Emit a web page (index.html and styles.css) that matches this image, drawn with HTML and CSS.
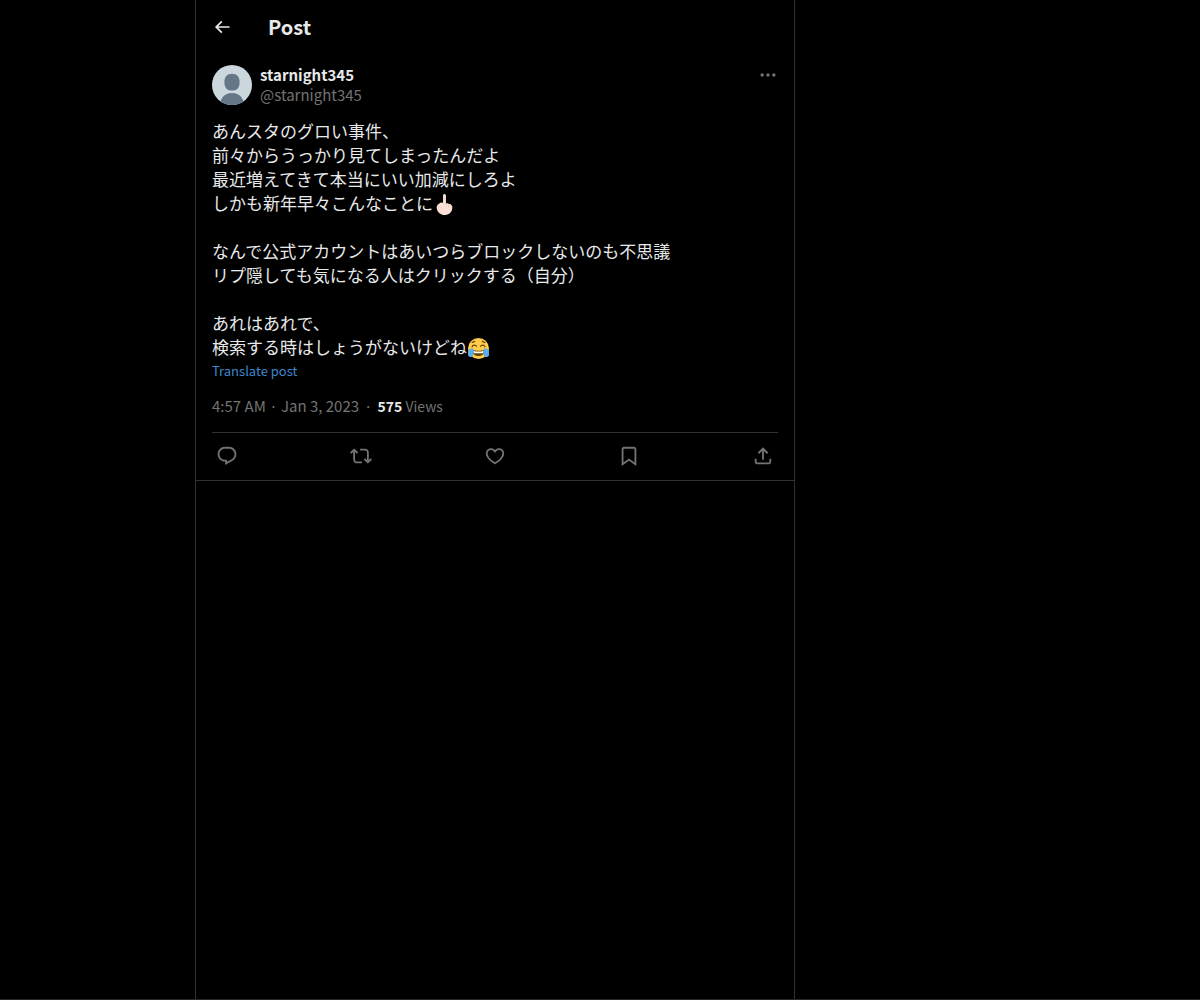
FILE: index.html
```html
<!DOCTYPE html>
<html lang="en">
<head>
    <meta charset="UTF-8">
    <meta name="viewport" content="width=device-width, initial-scale=1.0">
    <title>Post</title>
    <link rel="stylesheet" href="styles.css">
</head>
<body>
    <main class="column">
        <header class="top-bar">
            <button class="icon-btn back-btn" type="button" aria-label="Back">
                <svg viewBox="0 0 24 24"><path d="M7.414 13l5.043 5.04-1.414 1.42L3.586 12l7.457-7.46 1.414 1.42L7.414 11H21v2H7.414z"/></svg>
            </button>
            <h1>Post</h1>
        </header>

        <article class="post">
            <div class="author">
                <svg class="avatar" viewBox="0 0 40 40" role="img" aria-label="starnight345">
                    <circle cx="20" cy="20" r="20" fill="#ccd6dd"/>
                    <path d="M20 8.700c-5 0-7.600 3.400-7.600 8.200 0 4.900 1.700 8.600 7.600 8.600s7.600-3.700 7.600-8.600c0-4.800-2.600-8.200-7.600-8.200z" fill="#657786"/>
                    <path d="M8.500 36.400C10.500 30.800 14.500 28 20 28s9.500 2.800 11.500 8.400A20 20 0 0 1 8.500 36.400z" fill="#657786"/>
                </svg>
                <div class="names">
                    <a class="name" href="#">starnight345</a>
                    <a class="handle" href="#">@starnight345</a>
                </div>
                <button class="icon-btn more-btn" type="button" aria-label="More">
                    <svg viewBox="0 0 24 24"><path d="M3 12c0-1.100.9-2 2-2s2 .9 2 2-.9 2-2 2-2-.9-2-2zm9 2c1.100 0 2-.9 2-2s-.9-2-2-2-2 .9-2 2 .9 2 2 2zm7 0c1.100 0 2-.9 2-2s-.9-2-2-2-2 .9-2 2 .9 2 2 2z"/></svg>
                </button>
            </div>

            <div class="text" lang="ja">
                <p>あんスタのグロい事件、<br>
                前々からうっかり見てしまったんだよ<br>
                最近増えてきて本当にいい加減にしろよ<br>
                しかも新年早々こんなことに<svg class="emoji" viewBox="0 0 36 36" role="img" aria-label="middle finger"><path fill="#fce0d6" d="M15.500 3c0-1.700 1-3 2.500-3s2.500 1.300 2.500 3v13.500c.8-1.200 4.300-1 4.800.8 1.500-.8 4 .1 4.200 2.100 1.500.5 2.200 1.900 2 3.900-.4 7-5 12.700-12.500 12.700C10.500 36 5 30.500 4.500 23c-.2-3.600 3.200-5.800 6-7.500 2-1.200 5-1.200 5 1z"/><path fill="none" stroke="#efc5b6" stroke-linecap="round" d="M20.500 17v4.500M25.300 18v4.500M29.500 20v3.500M10 22.500c2 .2 3.500 1.500 4 3.500"/></svg></p>
                <p>なんで公式アカウントはあいつらブロックしないのも不思議<br>
                リプ隠しても気になる人はクリックする（自分）</p>
                <p>あれはあれで、<br>
                検索する時はしょうがないけどね<svg class="emoji" viewBox="0 0 36 36" role="img" aria-label="face with tears of joy"><circle cx="18" cy="18" r="18" fill="#ffcc4d"/><path fill="#664500" d="M28 20c-3 1.200-6 1.800-10 1.800S11 21.200 8 20c-.8-.3-1.500.3-1.300 1.300C7.600 26.700 12 31 18 31s10.400-4.300 11.300-9.700c.2-1-.5-1.600-1.300-1.300z"/><path fill="#fff" d="M9 21.800c2.500 1 5.700 1.500 9 1.500s6.500-.5 9-1.500c-.2 1.700-.9 3.200-1.700 4.200H10.700C9.900 25 9.200 23.500 9 21.800z"/><path fill="none" stroke="#664500" stroke-width="2" stroke-linecap="round" d="M7 15c1.200-3.600 6-3.800 7.500-.7M21.500 14.300C23 11.200 27.800 11.400 29 15M7 7.500c1.700 0 3.300-.8 4.500-2.300M24.500 5.200C25.700 6.700 27.300 7.500 29 7.500"/><path fill="#5dadec" d="M8.600 17.800C5 17.400 1 19.600-.3 22.900c-1.200 3.200-.2 7.500 2.500 9.100 2.300 1.500 5 .600 6.400-1.900 1.500-3.200 1-8 0-12.300zM27.400 17.800c3.600-.4 7.600 1.800 8.900 5.100 1.200 3.200.2 7.500-2.500 9.100-2.300 1.500-5 .6-6.400-1.900-1.500-3.200-1-8 0-12.300z"/></svg></p>
            </div>
            <button class="translate" type="button">Translate post</button>

            <p class="meta">
                <a href="#"><time datetime="2023-01-03T04:57">4:57 AM · Jan 3, 2023</time></a>
                <span>·</span>
                <span class="views"><strong>575</strong> Views</span>
            </p>

            <div class="actions">
                <button class="icon-btn" type="button" aria-label="Reply">
                    <svg viewBox="0 0 24 24"><path d="M1.751 10c0-4.420 3.584-8 8.005-8h4.366c4.490 0 8.129 3.640 8.129 8.130 0 2.960-1.607 5.680-4.196 7.110l-8.054 4.460v-3.690h-.067c-4.490.1-8.183-3.510-8.183-8.010zm8.005-6c-3.317 0-6.005 2.690-6.005 6 0 3.370 2.770 6.080 6.138 6.010l.351-.01h1.761v2.300l5.087-2.810c1.951-1.080 3.163-3.130 3.163-5.360 0-3.390-2.744-6.130-6.129-6.130H9.756z"/></svg>
                </button>
                <button class="icon-btn" type="button" aria-label="Repost">
                    <svg viewBox="0 0 24 24"><path d="M4.500 3.880l4.432 4.140-1.364 1.460L5.500 7.550V16c0 1.100.896 2 2 2H13v2H7.500c-2.209 0-4-1.790-4-4V7.550L1.432 9.480.068 8.020 4.500 3.880zM16.500 6H11V4h5.500c2.209 0 4 1.790 4 4v8.450l2.068-1.930 1.364 1.460-4.432 4.140-4.432-4.140 1.364-1.460 2.068 1.930V8c0-1.100-.896-2-2-2z"/></svg>
                </button>
                <button class="icon-btn" type="button" aria-label="Like">
                    <svg viewBox="0 0 24 24"><path d="M16.697 5.500c-1.222-.06-2.679.51-3.890 2.160l-.805 1.090-.806-1.090C9.984 6.010 8.526 5.440 7.304 5.500c-1.243.07-2.349.78-2.910 1.910-.552 1.120-.633 2.780.479 4.820 1.074 1.970 3.257 4.270 7.129 6.610 3.870-2.340 6.052-4.640 7.126-6.610 1.111-2.040 1.030-3.700.477-4.820-.561-1.130-1.666-1.840-2.908-1.910zm4.187 7.690c-1.351 2.480-4.001 5.120-8.379 7.670l-.503.300-.504-.300c-4.379-2.550-7.029-5.190-8.382-7.670-1.360-2.500-1.410-4.860-.514-6.670.887-1.790 2.647-2.910 4.601-3.010 1.651-.09 3.368.560 4.798 2.010 1.429-1.450 3.146-2.100 4.796-2.010 1.954.100 3.714 1.220 4.601 3.010.896 1.810.846 4.170-.514 6.670z"/></svg>
                </button>
                <button class="icon-btn" type="button" aria-label="Bookmark">
                    <svg viewBox="0 0 24 24"><path d="M4 4.500C4 3.120 5.119 2 6.500 2h11C18.881 2 20 3.120 20 4.500v18.440l-8-5.710-8 5.710V4.500zM6.500 4c-.276 0-.5.220-.5.500v14.560l6-4.290 6 4.290V4.500c0-.28-.224-.5-.5-.5h-11z"/></svg>
                </button>
                <button class="icon-btn" type="button" aria-label="Share">
                    <svg viewBox="0 0 24 24"><path d="M12 2.590l5.700 5.700-1.410 1.420L13 6.410V16h-2V6.410l-3.300 3.300-1.410-1.420L12 2.590zM21 15l-.02 3.510c0 1.380-1.120 2.490-2.500 2.490H5.500C4.110 21 3 19.880 3 18.500V15h2v3.500c0 .28.220.5.500.5h12.980c.280 0 .5-.22.500-.5L19 15h2z"/></svg>
                </button>
            </div>
        </article>
    </main>
</body>
</html>
```

FILE: styles.css
```css
:root {
    --text-color: #e7e9ea;
    --muted-color: #737373;
    --line-color: #2f3133;
    --link-color: #3f87cf;
}

* {
    margin: 0;
    padding: 0;
    box-sizing: border-box;
}

body {
    min-height: 100vh;
    display: grid;
    grid-template-columns: minmax(0, 195px) minmax(320px, 600px) minmax(0, 1fr);
    font-family: "Noto Sans CJK JP", sans-serif;
    font-size: 15px;
    line-height: 20px;
    color: var(--text-color);
    background-color: #000;
    border-bottom: 1px solid #2a2426;
}

a {
    color: inherit;
    text-decoration: none;
}

button {
    background: none;
    border: none;
    font: inherit;
    cursor: pointer;
}

.column {
    grid-column: 2;
    border-left: 1px solid var(--line-color);
    border-right: 1px solid var(--line-color);
}

.icon-btn {
    display: flex;
    color: var(--muted-color);
}

.icon-btn svg {
    width: 22px;
    height: 22px;
    fill: currentColor;
}

.top-bar {
    display: flex;
    align-items: center;
    gap: 36px;
    height: 53px;
    padding: 0 16px;
}

.back-btn {
    color: var(--text-color);
}

.back-btn svg {
    width: 20px;
    height: 20px;
}

.top-bar h1 {
    font-size: 20px;
    line-height: 24px;
    font-weight: 700;
}

.post {
    padding: 12px 16px 0;
    border-bottom: 1px solid var(--line-color);
}

.author {
    display: flex;
    align-items: flex-start;
    gap: 8px;
}

.avatar {
    width: 40px;
    height: 40px;
}

.names {
    flex: 1;
    display: flex;
    flex-direction: column;
}

.name {
    font-weight: 700;
}

.handle {
    color: var(--muted-color);
}

.more-btn svg {
    width: 20px;
    height: 20px;
}

.text {
    margin-top: 14px;
    font-size: 17px;
    line-height: 24px;
}

.text p + p {
    margin-top: 24px;
}

.emoji {
    width: 21px;
    height: 21px;
    margin: 0 1px;
    vertical-align: -5px;
}

.translate {
    display: block;
    font-size: 13px;
    line-height: 24px;
    color: var(--link-color);
}

.meta {
    display: flex;
    flex-wrap: wrap;
    gap: 5px;
    padding: 13px 0 16px;
    color: var(--muted-color);
}

.views {
    font-size: 14px;
}

.views strong {
    color: var(--text-color);
}

.actions {
    display: flex;
    align-items: center;
    justify-content: space-between;
    height: 48px;
    padding: 0 4px 2px;
    border-top: 1px solid var(--line-color);
}
```
